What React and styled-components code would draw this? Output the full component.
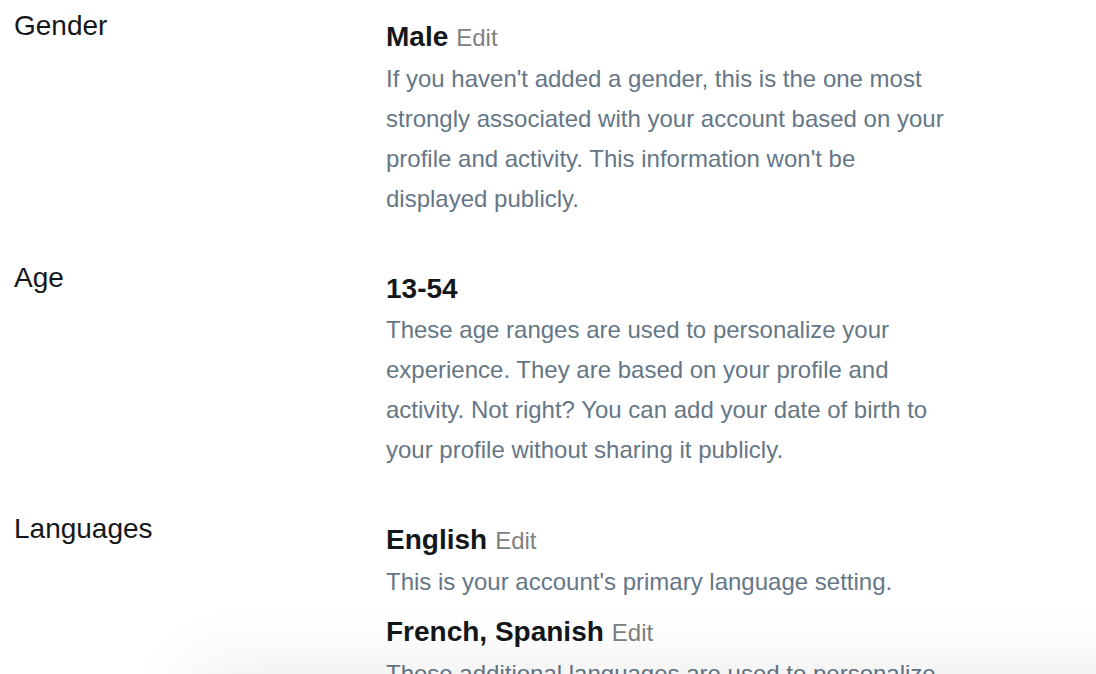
import React from 'react'
import styled, { createGlobalStyle } from 'styled-components'

const GlobalStyle = createGlobalStyle`
    html, body {
        margin: 0;
        padding: 0;
        background: #ffffff;
        font-family: "Liberation Sans", Arial, Helvetica, sans-serif;
        overflow: hidden;
    }
`

const Page = styled.div`
    display: flex;
    flex-direction: column;
    gap: 43px;
    padding: 10px 0 0 14px;
`

const Row = styled.div`
    display: flex;
    align-items: flex-start;
`

const Label = styled.div`
    width: 372px;
    flex-shrink: 0;
    font-size: 28px;
    line-height: 32px;
    color: #14171a;
`

const Content = styled.div`
    display: flex;
    flex-direction: column;
    gap: 9px;
    padding-top: 6px;
    width: 568px;
`

const Group = styled.div``

const Value = styled.div`
    font-size: 28px;
    line-height: 42px;
    font-weight: bold;
    color: #14171a;
`

const Edit = styled.span`
    font-size: 24px;
    font-weight: normal;
    color: #808080;
    margin-left: 8px;
`

const Desc = styled.div`
    font-size: 24px;
    line-height: 40px;
    color: #657786;
`

const BottomShadow = styled.div`
    position: fixed;
    left: 200px;
    right: -100px;
    top: 674px;
    height: 80px;
    background: #fff;
    box-shadow: 0 0 70px 10px rgba(0, 0, 0, 0.07);
`

const rows = [
    {
        label: 'Gender',
        items: [
            {
                value: 'Male',
                edit: true,
                desc: "If you haven't added a gender, this is the one most strongly associated with your account based on your profile and activity. This information won't be displayed publicly.",
            },
        ],
    },
    {
        label: 'Age',
        items: [
            {
                value: '13-54',
                desc: 'These age ranges are used to personalize your experience. They are based on your profile and activity. Not right? You can add your date of birth to your profile without sharing it publicly.',
            },
        ],
    },
    {
        label: 'Languages',
        items: [
            {
                value: 'English',
                edit: true,
                desc: "This is your account's primary language setting.",
            },
            {
                value: 'French, Spanish',
                edit: true,
                desc: 'These additional languages are used to personalize your experience.',
            },
        ],
    },
]

const App = () => {
    return <>
        <GlobalStyle />
        <Page>
            {rows.map(row =>
                <Row key={row.label}>
                    <Label>{row.label}</Label>
                    <Content>
                        {row.items.map(item =>
                            <Group key={item.value}>
                                <Value>
                                    {item.value}
                                    {item.edit && <Edit>Edit</Edit>}
                                </Value>
                                <Desc>{item.desc}</Desc>
                            </Group>
                        )}
                    </Content>
                </Row>
            )}
        </Page>
        <BottomShadow />
    </>
}

export default App
